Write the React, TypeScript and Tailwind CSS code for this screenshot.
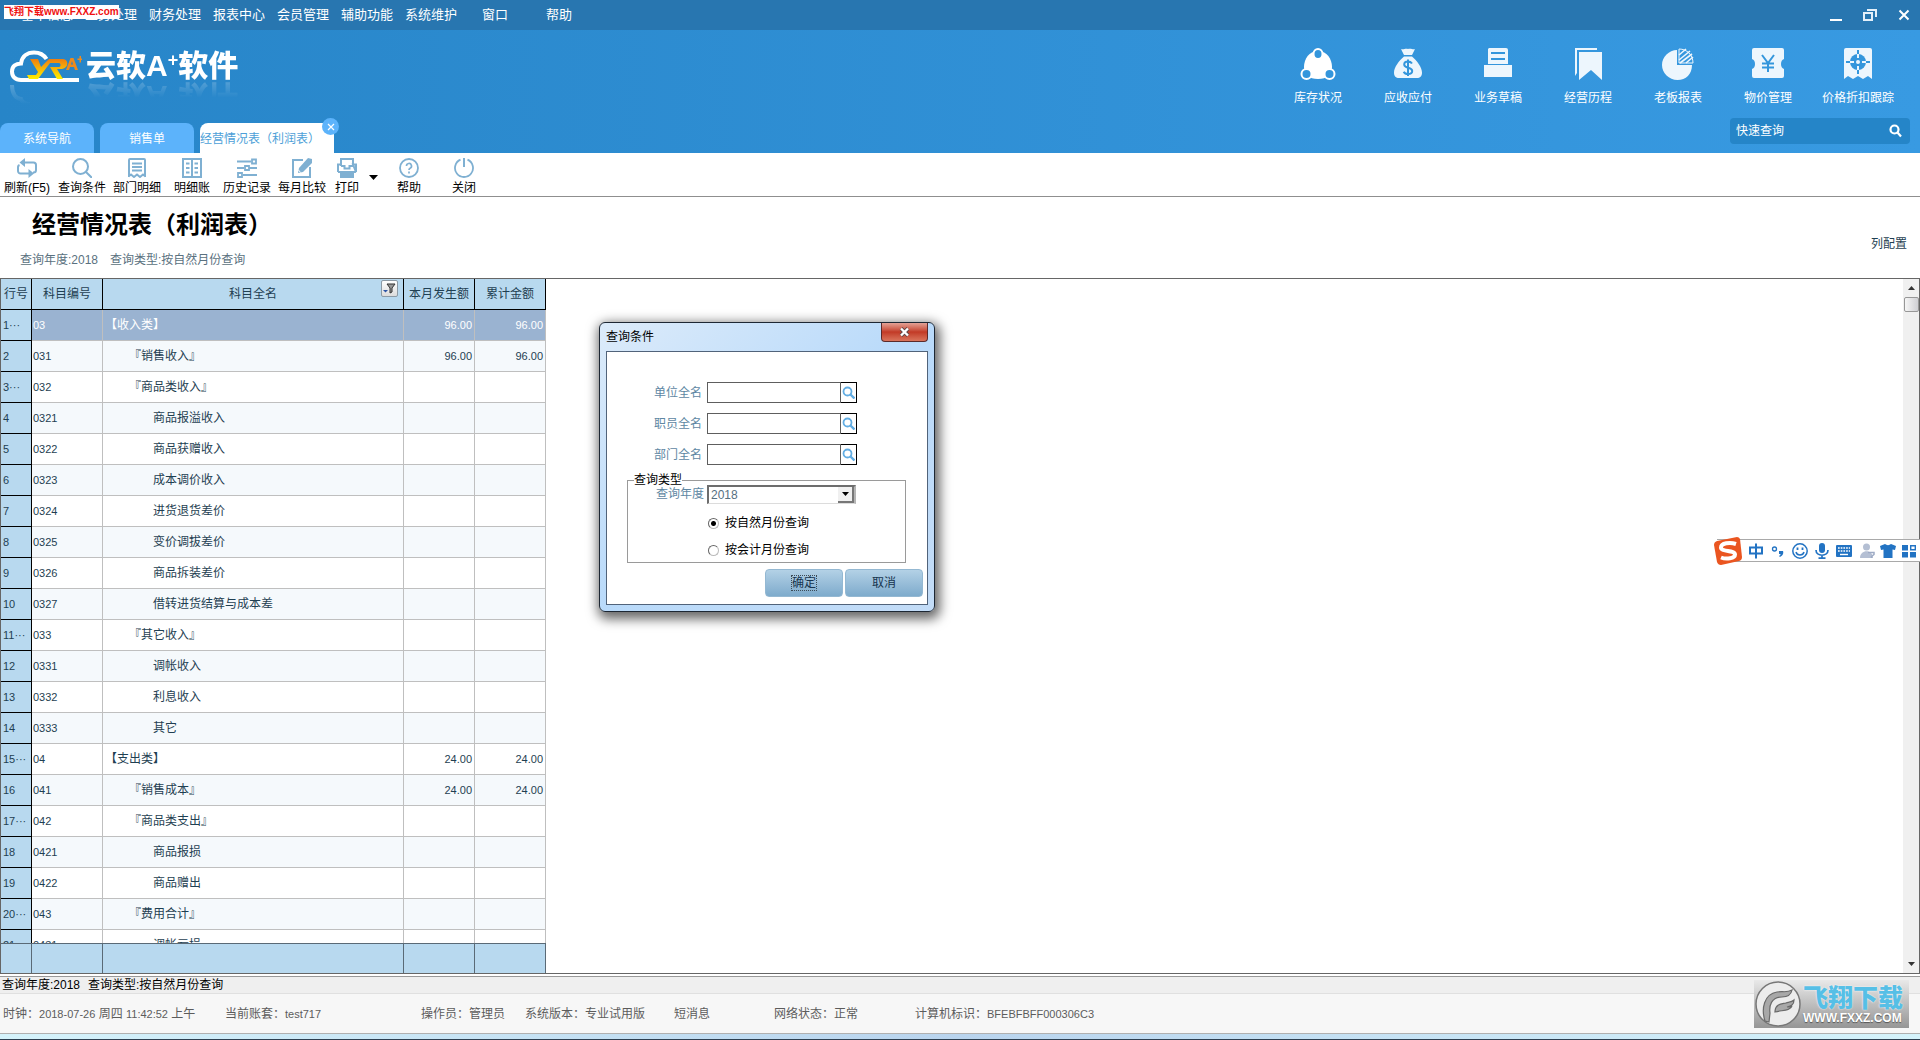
import { useState } from "react";
import type { ReactNode } from "react";

const menus = [
  "基本信息",
  "业务处理",
  "财务处理",
  "报表中心",
  "会员管理",
  "辅助功能",
  "系统维护",
  "窗口",
  "帮助",
];

const rows = [
  { no: "1···", code: "03", name: "【收入类】", level: 0, month: "96.00", total: "96.00" },
  { no: "2", code: "031", name: "『销售收入』", level: 1, month: "96.00", total: "96.00" },
  { no: "3···", code: "032", name: "『商品类收入』", level: 1 },
  { no: "4", code: "0321", name: "商品报溢收入", level: 2 },
  { no: "5", code: "0322", name: "商品获赠收入", level: 2 },
  { no: "6", code: "0323", name: "成本调价收入", level: 2 },
  { no: "7", code: "0324", name: "进货退货差价", level: 2 },
  { no: "8", code: "0325", name: "变价调拔差价", level: 2 },
  { no: "9", code: "0326", name: "商品拆装差价", level: 2 },
  { no: "10", code: "0327", name: "借转进货结算与成本差", level: 2 },
  { no: "11···", code: "033", name: "『其它收入』", level: 1 },
  { no: "12", code: "0331", name: "调帐收入", level: 2 },
  { no: "13", code: "0332", name: "利息收入", level: 2 },
  { no: "14", code: "0333", name: "其它", level: 2 },
  { no: "15···", code: "04", name: "【支出类】", level: 0, month: "24.00", total: "24.00" },
  { no: "16", code: "041", name: "『销售成本』", level: 1, month: "24.00", total: "24.00" },
  { no: "17···", code: "042", name: "『商品类支出』", level: 1 },
  { no: "18", code: "0421", name: "商品报损", level: 2 },
  { no: "19", code: "0422", name: "商品赠出", level: 2 },
  { no: "20···", code: "043", name: "『费用合计』", level: 1 },
  { no: "21", code: "0431", name: "调帐亏损", level: 2 },
];

const indents = ["pl-0.5", "pl-[26px]", "pl-[50px]"];

const ToolIcon = ({ children }: { children: ReactNode }) => (
  <svg className="size-5" viewBox="0 0 20 20" fill="none" stroke="#7fb0d2" strokeWidth="2">
    {children}
  </svg>
);

const tools = [
  {
    label: "刷新(F5)",
    icon: (
      <ToolIcon>
        <path d="M6 4.500h10.500A2.500 2.500 0 0 1 19 7v5a2.500 2.500 0 0 1-2.500 2.500H16M2.500 7A2.500 2.500 0 0 0 1 9.500V13a2.500 2.500 0 0 0 2.500 2.500H13" />
        <path d="M8 0v9L2.500 4.500zM11.500 11v9l5.500-4.500z" fill="#7fb0d2" stroke="none" />
      </ToolIcon>
    ),
  },
  {
    label: "查询条件",
    icon: (
      <ToolIcon>
        <circle cx="8.500" cy="8.500" r="7.500" />
        <path d="m14 14 6 6" />
      </ToolIcon>
    ),
  },
  {
    label: "部门明细",
    icon: (
      <ToolIcon>
        <path d="M2 19V2a1 1 0 0 1 1-1h14a1 1 0 0 1 1 1v17M1.500 18.500 4 16.500l3 2.500 3-2.500 3 2.500 3-2.500 2.500 2M5 5.500h10M5 9h10M5 12.500h10" />
      </ToolIcon>
    ),
  },
  {
    label: "明细账",
    icon: (
      <ToolIcon>
        <path d="M1 1h18v18H1zM10 1v18M4 5.500h3.500M4 10h3.500M4 14.500h3.500M12.500 5.500H16M12.500 10H16M12.500 14.500H16" />
      </ToolIcon>
    ),
  },
  {
    label: "历史记录",
    icon: (
      <ToolIcon>
        <path d="M0 3.500h14M0 10h7M12 10h8M6 17h14" />
        <path d="M15 1.500h4v4h-4zM8 8h4v4H8zM1 15h4v4H1z" strokeWidth="1.800" />
      </ToolIcon>
    ),
  },
  {
    label: "每月比较",
    icon: (
      <ToolIcon>
        <path d="M11 2H1v17h17V9" />
        <path d="m16 0 4 1v4L11 14l-5 1 1-5z" fill="#7fb0d2" stroke="none" />
        <path d="m6.500 12 2 2.500" stroke="#fff" strokeWidth="1" />
      </ToolIcon>
    ),
  },
  {
    label: "打印",
    icon: (
      <ToolIcon>
        <path d="M4 8V1h12v7M1 14V6.500h3M16 6.500h3V14zM1 14h18M4 8h3.500v2.500h5V8H16" />
        <path d="M3 15h14v5H3z" fill="#7fb0d2" stroke="none" />
      </ToolIcon>
    ),
  },
  {
    label: "帮助",
    icon: (
      <ToolIcon>
        <circle cx="10" cy="10" r="9" strokeWidth="1.800" />
        <path d="M7.500 8a2.500 2.500 0 1 1 3.600 2.200c-.8.400-1.100.9-1.100 1.900M10 13.500v2" strokeWidth="1.700" />
      </ToolIcon>
    ),
  },
  {
    label: "关闭",
    icon: (
      <ToolIcon>
        <path d="M6.500 1.700a9 9 0 1 0 7 0" strokeWidth="1.800" />
        <path d="M10 0v9" />
      </ToolIcon>
    ),
  },
];

const NavIcon = ({ children }: { children: ReactNode }) => (
  <svg className="h-8 w-9" viewBox="0 0 36 32" fill="#edf6fd">
    {children}
  </svg>
);

const shortcuts = [
  {
    label: "库存状况",
    icon: (
      <NavIcon>
        <path d="M18 3C9 3 4 11 4 19c0 8 5 12 14 12s14-4 14-12C32 11 27 3 18 3z" fill="#fff" />
        <g fill="#3496dc" stroke="#fff" strokeWidth="2">
          <ellipse cx="18" cy="6" rx="4.500" ry="5" />
          <circle cx="6.500" cy="26" r="5" />
          <circle cx="29.500" cy="26" r="5" />
        </g>
      </NavIcon>
    ),
  },
  {
    label: "应收应付",
    icon: (
      <NavIcon>
        <path d="M11 1c3 1 4-1 7 0 3-1 5 1 7 0l-3 6h-8zM14 8.500h8c5 4 10 11 10 16 0 4-2 5.500-5 5.500H9c-3 0-5-1.500-5-5.500 0-5 5-12 10-16z" />
        <path d="M22 15.500c-1-1.500-2.300-2-4-2-2.200 0-3.800 1-3.800 3 0 4.500 8 2 8 6.500 0 2-1.700 3-4.200 3-2 0-3.500-.7-4.300-2.300M18 11.500v16.500" fill="none" stroke="#3496dc" strokeWidth="2" />
      </NavIcon>
    ),
  },
  {
    label: "业务草稿",
    icon: (
      <NavIcon>
        <path d="M9 0h17a2 2 0 0 1 2 2v14H8V1zM4 17h28v12H4z" />
        <path d="M11 5h14M11 11h14" stroke="#3496dc" strokeWidth="2" />
      </NavIcon>
    ),
  },
  {
    label: "经营历程",
    icon: (
      <NavIcon>
        <path d="M5 0h22v2H7v23l-2 3zM9 4h23v28l-11-10L9 32z" />
      </NavIcon>
    ),
  },
  {
    label: "老板报表",
    icon: (
      <NavIcon>
        <path d="M17 2v15h15c0 9-6 15-14.500 15S2 25 2 17 9 2 17 2z" />
        <path d="m19 7 7-6M19 12 30 3M20 15 32 6M26 15l7-6" stroke="#edf6fd" strokeWidth="1.600" />
        <path d="M19 1v14h14c0-8-6-14-14-14z" fill="none" stroke="#edf6fd" strokeWidth="1" />
      </NavIcon>
    ),
  },
  {
    label: "物价管理",
    icon: (
      <NavIcon>
        <path d="M4 0h28a2 2 0 0 1 2 2v9c-4 1-4 9 0 10v7a2 2 0 0 1-2 2H4a2 2 0 0 1-2-2v-7c4-1 4-9 0-10V2a2 2 0 0 1 2-2z" />
        <path d="m12 7 6 8 6-8M18 15v9M12 15.500h12M12 19.500h12" fill="none" stroke="#3496dc" strokeWidth="2" />
      </NavIcon>
    ),
  },
  {
    label: "价格折扣跟踪",
    icon: (
      <NavIcon>
        <path d="M6 0h24a2 2 0 0 1 2 2v29l-4-3-5 3-5-3-5 3-5-3-4 3V2a2 2 0 0 1 2-2z" />
        <circle cx="18" cy="14" r="8" fill="#3496dc" />
        <path d="M18 2v9M18 17v9M6 14h9M21 14h9" stroke="#3496dc" strokeWidth="2" />
        <path d="M18 6v4M18 18v4M10 14h4M22 14h4" stroke="#edf6fd" strokeWidth="2" />
        <circle cx="18" cy="14" r="2" />
      </NavIcon>
    ),
  },
];

const Logo = () => (
  <a href="#home" aria-label="云软A+软件" className="ml-2 flex h-11 items-start gap-1 text-white">
    <svg width="74" height="56" viewBox="0 0 74 56">
      <defs>
        <linearGradient id="gold" x1="0" y1="0" x2="0" y2="1">
          <stop offset="0" stopColor="#ee7d10" />
          <stop offset="1" stopColor="#fff100" />
        </linearGradient>
        <linearGradient id="fade" x1="0" y1="0" x2="0" y2="1">
          <stop offset="0" stopColor="#fff" stopOpacity="0.22" />
          <stop offset="1" stopColor="#fff" stopOpacity="0" />
        </linearGradient>
      </defs>
      <path d="M71 30H13C7 30 4 26.500 4 21.500S7.500 13.500 13 13.500C14 6.500 19 2.500 26 2.500c6 0 10 2.500 12.500 6.500" fill="none" stroke="#fff" strokeWidth="4" />
      <path d="M4 35C4 44 8 49 13 49c1 4 5 5 9 5" fill="none" stroke="url(#fade)" strokeWidth="4" />
      <path d="M22 9h8l3 8 8-8h14c6 0 6 9-1 10h-5l6 10h-6l-7-12h9c2 0 2-4 0-4h-9L30 29h-9l-2-4h9l2-3z" fill="url(#gold)" />
      <path d="M58 20l4.500-12h3L70 20h-3l-1-3h-4l-1 3zM63 14.500h2L64 11zM69.500 8.500h2V6h1.500v2.500h2V10h-2v2.500h-1.500V10h-2z" fill="#ee8a1c" />
    </svg>
    <span className="flex items-start text-[30px] leading-8 font-black [-webkit-box-reflect:below_-2px_linear-gradient(transparent_45%,rgba(255,255,255,0.22))]">
      云软A<span className="text-[18px] leading-5">+</span>软件
    </span>
  </a>
);

const Header = () => (
  <header className="bg-linear-to-r from-[#2785c8] to-[#389ae2] text-white">
    <nav className="flex h-[30px] items-center justify-between bg-[#2876b0]">
      <div className="flex pl-[15px] text-[13px]">
        {menus.map((m) => (
          <button key={m} className="w-16 text-center leading-[30px]">
            {m}
          </button>
        ))}
      </div>
      <div className="flex items-center gap-5 pr-[9px]">
        <button aria-label="最小化">
          <svg width="14" height="14" viewBox="0 0 14 14"><path d="M1 11h12v2H1z" fill="#fff" /></svg>
        </button>
        <button aria-label="还原">
          <svg width="14" height="14" viewBox="0 0 14 14" fill="none" stroke="#e4f0fa" strokeWidth="2"><path d="M1 5h8v7H1zM4 2h9v7" /></svg>
        </button>
        <button aria-label="关闭窗口">
          <svg width="14" height="14" viewBox="0 0 14 14" stroke="#fff" strokeWidth="2"><path d="m2.500 2.500 9 9M11.500 2.500l-9 9" /></svg>
        </button>
      </div>
    </nav>
    <div className="flex h-[123px] justify-between">
      <div className="flex flex-col justify-between pt-5">
        <Logo />
        <div className="flex gap-1.5 text-xs">
          <button className="h-[30px] w-[94px] rounded-t-lg bg-[#5cb3fb] pt-0.5">系统导航</button>
          <button className="h-[30px] w-[94px] rounded-t-lg bg-[#5cb3fb] pt-0.5">销售单</button>
          <div className="relative">
            <button className="h-[30px] w-[134px] rounded-t-lg bg-white pt-0.5 text-left whitespace-nowrap text-[#4d9fd8]">
              经营情况表（利润表）
            </button>
            <button aria-label="关闭标签" className="absolute -top-[5px] -right-[5px] flex size-[17px] items-center justify-center rounded-full bg-[#5cb3fb]">
              <svg width="8" height="8" viewBox="0 0 8 8" stroke="#fff" strokeWidth="1.200"><path d="m1 1 6 6M7 1 1 7" /></svg>
            </button>
          </div>
        </div>
      </div>
      <div className="flex flex-col items-end gap-3 pt-[18px]">
        <div className="flex pr-[17px]">
          {shortcuts.map((s) => (
            <button key={s.label} className="flex w-[90px] flex-col items-center gap-2.5 text-xs leading-4">
              {s.icon}
              {s.label}
            </button>
          ))}
        </div>
        <div className="mr-2.5 flex h-[26px] w-[180px] items-center rounded bg-[#2585c8] px-1.5">
          <input aria-label="快速查询" placeholder="快速查询" className="w-full min-w-0 bg-transparent text-xs outline-none placeholder:text-white" />
          <button aria-label="搜索">
            <svg width="16" height="16" viewBox="0 0 16 16" fill="none" stroke="#fff" strokeWidth="2.200"><circle cx="6.500" cy="6.500" r="4" /><path d="m9.500 9.500 3.500 4" /></svg>
          </button>
        </div>
      </div>
    </div>
  </header>
);

const Toolbar = () => (
  <div className="flex h-11 border-b border-[#8f8f8f] bg-white pt-[5px] text-xs text-black">
    {tools.map((t) => (
      <div key={t.label} className="flex">
        <button className={`flex flex-col items-center gap-0.5 leading-4 whitespace-nowrap ${t.label === "打印" ? "w-[34px]" : "w-[55px] pr-px"}`}>
          {t.icon}
          {t.label}
        </button>
        {t.label === "打印" && (
          <button aria-label="打印选项" className="flex w-[18px] items-center justify-center">
            <svg width="9" height="5" viewBox="0 0 9 5"><path d="M0 0h9L4.500 5z" /></svg>
          </button>
        )}
      </div>
    ))}
  </div>
);

const ReportTable = () => (
  <table className="w-[546px] table-fixed border-separate border-spacing-0 border-l border-[#666] text-xs text-[#1f3f52]">
    <colgroup>
      <col className="w-[31px]" />
      <col className="w-[71px]" />
      <col className="w-[301px]" />
      <col className="w-[71px]" />
      <col className="w-[71px]" />
    </colgroup>
    <thead className="sticky top-0">
      <tr className="h-[31px]">
        {["行号", "科目编号", "科目全名", "本月发生额", "累计金额"].map((h) => (
          <th key={h} scope="col" className="relative border-r border-b border-black bg-[#b8d9ef] p-0 font-normal">
            {h}
            {h === "科目全名" && (
              <button aria-label="筛选" className="absolute top-px right-[5px] flex size-[17px] items-center justify-center rounded-xs border border-[#8c9aa5] bg-linear-to-b from-white to-[#dcdcdc]">
                <svg width="13" height="11" viewBox="0 0 13 11">
                  <path d="M4 1h8L9 5v4L7 10V5z" fill="#999" stroke="#333" />
                  <path d="M0 7h5L2.500 9.500z" fill="#2c55a5" />
                </svg>
              </button>
            )}
          </th>
        ))}
      </tr>
    </thead>
    <tbody>
      {rows.map((r, i) => {
        const cell = "border-r border-b border-[#bfbfbf] p-0";
        return (
          <tr key={r.code} className={`h-[31px] ${i === 0 ? "bg-[#9ab3d1] text-white" : i % 2 ? "bg-[#f5f9fc]" : "bg-white"}`}>
            <td className="border-r border-b border-black bg-[#b8d9ef] p-0 pl-0.5 text-[11px] whitespace-nowrap text-[#1f3f52]">{r.no}</td>
            <td className={`${cell} pl-px text-[11px]`}>{r.code}</td>
            <td className={`${cell} ${indents[r.level]}`}>{r.name}</td>
            <td className={`${cell} pr-0.5 text-right text-[11px]`}>{r.month}</td>
            <td className={`${cell} pr-0.5 text-right text-[11px]`}>{r.total}</td>
          </tr>
        );
      })}
    </tbody>
    <tfoot className="sticky bottom-0">
      <tr className="h-[30px]">
        {[0, 1, 2, 3, 4].map((c) => (
          <td key={c} className="border-t border-r border-[#5a6a76] bg-[#b8d9ef] p-0" />
        ))}
      </tr>
    </tfoot>
  </table>
);

const ScrollBar = () => (
  <div className="flex w-4 flex-col items-center justify-between bg-[#f0f0f0]">
    <div className="flex w-full flex-col items-center">
      <button aria-label="向上" className="flex h-[18px] items-center">
        <svg width="7" height="4" viewBox="0 0 7 4"><path d="M0 4h7L3.500 0z" fill="#333" /></svg>
      </button>
      <div className="h-[15px] w-[15px] rounded-xs border border-[#979797] bg-linear-to-r from-[#f6f6f6] to-[#cfcfd3]" />
    </div>
    <button aria-label="向下" className="flex h-[18px] items-center">
      <svg width="7" height="4" viewBox="0 0 7 4"><path d="M0 0h7L3.500 4z" fill="#333" /></svg>
    </button>
  </div>
);

const QueryDialog = () => {
  const [mode, setMode] = useState("natural");

  return (
    <div role="dialog" aria-label="查询条件" className="absolute top-[322px] left-[599px] w-[336px] rounded-md border border-[#1d2733] bg-linear-to-br from-[#dcebfa] via-[#b9dafa] to-[#c3dcf7] px-1.5 pb-1.5 text-xs shadow-[2px_4px_12px_3px_rgba(0,0,0,0.6)]">
      <div className="flex h-7 justify-between">
        <h2 className="pt-1.5 leading-4 text-black">查询条件</h2>
        <button aria-label="关闭对话框" className="flex h-[19px] w-[47px] items-center justify-center rounded-b border border-t-0 border-[#5b2a2a] bg-linear-to-b from-[#e2a196] via-[#c23a26] to-[#d9745c]">
          <svg width="11" height="10" viewBox="0 0 11 10"><path d="m2 1.500 7 7M9 1.500l-7 7" stroke="#5e4a4a" strokeWidth="4" /><path d="m2 1.500 7 7M9 1.500l-7 7" stroke="#fff" strokeWidth="2.400" /></svg>
        </button>
      </div>
      <form className="h-[254px] border border-[#51637a] bg-white pt-[30px] text-[#5e87a3]" onSubmit={(e) => e.preventDefault()}>
        <div className="flex flex-col gap-2.5 pl-[47px]">
          {["单位全名", "职员全名", "部门全名"].map((f) => (
            <div key={f} className="flex h-[21px] items-center">
              <label htmlFor={f} className="w-[53px]">{f}</label>
              <input id={f} className="h-[21px] w-[134px] border border-[#5e5e5e] px-1 outline-none" />
              <button type="button" aria-label={`选择${f}`} className="flex h-[21px] w-4 items-center justify-center border border-l-0 border-black">
                <svg width="13" height="13" viewBox="0 0 13 13" fill="none" stroke="#62ade3" strokeWidth="1.800"><circle cx="5.500" cy="5.500" r="4" /><path d="m8.500 8.500 4 4" strokeWidth="2.400" /></svg>
              </button>
            </div>
          ))}
        </div>
        <fieldset className="mt-[7px] ml-5 h-[91px] w-[279px] border border-[#9a9a9a] px-1.5 text-black">
          <legend className="leading-4">查询类型</legend>
          <div className="-mt-1 flex h-5 items-center pl-[22px]">
            <label htmlFor="year" className="w-[51px] text-[#5e87a3]">查询年度</label>
            <div className="relative">
              <select id="year" defaultValue="2018" className="h-[19px] w-[149px] appearance-none border-t-2 border-r-2 border-b border-l-2 border-t-[#6d6d6d] border-r-[#b5b5b5] border-b-[#dcdcdc] border-l-[#6d6d6d] bg-white pl-0.5 text-[#56707f] outline-none">
                <option>2018</option>
                <option>2017</option>
              </select>
              <span className="pointer-events-none absolute top-0.5 right-0.5 flex h-4 w-4 items-center justify-center border-r-2 border-b-2 border-[#777] bg-[#f0f0f0]">
                <svg width="7" height="4" viewBox="0 0 7 4"><path d="M0 0h7L3.500 4z" /></svg>
              </span>
            </div>
          </div>
          {[
            { id: "natural", label: "按自然月份查询" },
            { id: "fiscal", label: "按会计月份查询" },
          ].map((o) => (
            <label key={o.id} className="mt-[11px] flex h-4 items-center gap-1.5 pl-[74px]">
              <input
                type="radio"
                name="mode"
                checked={mode === o.id}
                onChange={() => setMode(o.id)}
                className="size-[11px] appearance-none rounded-full border border-t-[#666] border-r-[#bbb] border-b-[#bbb] border-l-[#666] bg-white checked:bg-[radial-gradient(circle,#000_2px,#fff_3px)]"
              />
              {o.label}
            </label>
          ))}
        </fieldset>
        <div className="mt-1.5 flex justify-end gap-0.5 pr-1 text-[#16344f]">
          <button className="h-7 w-[78px] rounded-sm border border-[#94b8d2] bg-linear-to-b from-[#b3d1e6] to-[#7eabcc]">
            <span className="outline-1 outline-[#3c4b57] outline-dotted">确定</span>
          </button>
          <button type="button" className="h-7 w-[78px] rounded-sm border border-[#94b8d2] bg-linear-to-b from-[#b3d1e6] to-[#7eabcc]">
            取消
          </button>
        </div>
      </form>
    </div>
  );
};

const ImeBar = () => (
  <div className="absolute top-[539px] right-0 flex h-[23px] items-center border-y border-[#a9a9a9] bg-white">
    <svg className="-my-1 -ml-1 h-7 w-[30px]" viewBox="0 0 30 28">
      <path d="M4 4 24 0q2 0 3 2l2 18q0 3-3 4L8 28q-3 0-4-3L1 8q0-3 3-4z" fill="#ea5520" />
      <path d="M23 7C17 5 8 6 8 10.500c0 5 14 2 14 7 0 4-9 5-14 3" fill="none" stroke="#fff" strokeWidth="4" />
    </svg>
    <svg width="177" height="20" viewBox="0 0 177 20" fill="#2273c3">
      <path d="M7 6.500h12v6H7zM13 2.500v15" fill="none" stroke="#2273c3" strokeWidth="2" />
      <circle cx="31.500" cy="8" r="2" fill="none" stroke="#2273c3" strokeWidth="1.300" />
      <path d="M36 10h4c1 3-1 5-3 6l-1-1c1-.5 1.500-1 1.500-2H36z" />
      <g fill="none" stroke="#2273c3" strokeWidth="1.500">
        <circle cx="57" cy="10" r="7.200" />
        <path d="M53 11c1 4 7 4 8 0" />
        <path d="M54.500 6.500v2.500M59.500 6.500v2.500" strokeWidth="1.800" />
        <path d="M73 9c0 7 12 7 12 0M79 14v3M75.500 17.200h7" strokeWidth="1.700" />
      </g>
      <rect x="76" y="2" width="6" height="10" rx="3" />
      <rect x="93" y="4" width="16" height="12" rx="1" />
      <path d="M95 7h12M95 10h12" stroke="#fff" strokeWidth="1.600" strokeDasharray="1.700 1" />
      <path d="M97 13.500h8" stroke="#fff" strokeWidth="1.400" />
      <g fill="#b4bfd3">
        <circle cx="123.500" cy="6" r="3.500" />
        <path d="M117 17c0-9 13-9 13 0z" />
        <path d="M125 11.500h6v2l-2.500 2v1.500" fill="none" stroke="#9eabc5" strokeWidth="1.500" />
      </g>
      <path d="M142 3c1.500 1.500 4.500 1.500 6 0l5 2-1 4-2.500-.5V17h-9V8.500L138 9l-1-4z" />
      <path d="M159 4h6v5.500h-6zM159 11h6v5.500h-6zM167 11h6v5.500h-6z" />
      <path d="M167.700 4.700h4.600v4h-4.600z" fill="none" stroke="#2273c3" strokeWidth="1.400" />
    </svg>
  </div>
);

const StatusBar = () => (
  <footer>
    <div className="mt-0.5 h-[18px] border-t border-b border-t-[#999] border-b-[#e0e0e0] bg-[#efefef] pl-0.5 text-xs leading-4 text-black">
      查询年度:2018<span className="ml-2">查询类型:按自然月份查询</span>
    </div>
    <div className="flex h-10 items-center border-b border-[#b0b0b0] bg-[#f7f7f7] pl-[3px] text-xs whitespace-nowrap text-[#5c5c5c]">
      <span className="w-[222px]">时钟：<span className="text-[11px]">2018-07-26</span> 周四 <span className="text-[11px]">11:42:52</span> 上午</span>
      <span className="w-[196px]">当前账套：<span className="text-[11px]">test717</span></span>
      <span className="w-[104px]">操作员：管理员</span>
      <span className="w-[149px]">系统版本：专业试用版</span>
      <span className="w-[100px]">短消息</span>
      <span className="w-[141px]">网络状态：正常</span>
      <span>计算机标识：<span className="text-[11px]">BFEBFBFF000306C3</span></span>
    </div>
    <div className="h-1.5 border-b border-[#2c3e50] bg-linear-to-r from-[#d5f3fb] via-[#b9d4ee] to-[#d5f3fb]" />
  </footer>
);

const SiteBadge = () => (
  <div className="absolute right-[11px] bottom-3 flex h-12 w-[155px] items-center gap-0.5 bg-linear-to-b from-[#e9e9e9] to-[#969696] pl-px">
    <svg className="size-[46px] shrink-0" viewBox="0 0 46 46">
      <circle cx="23" cy="23" r="22" fill="#ececec" stroke="#777" strokeWidth="1.500" />
      <path d="M10 40C6 28 9 13 22 11c6-1 10 1 15-2-1 5-5 7-10 7-11 0-13 9-12 16l-1 9zM20 30c1-8 8-7 11-8 4-1 6-1 8-3 0 5-3 6-7 7 2 0 4 0 5-1-2 5-9 4-17 6z" fill="#a8a8a8" stroke="#6a6a6a" strokeWidth="1.200" />
    </svg>
    <div className="flex flex-col whitespace-nowrap">
      <span className="text-[25px] leading-7 font-black text-[#56bfe6] text-shadow-[0_0_2px_#fff]">飞翔下载</span>
      <span className="text-xs leading-3 font-bold text-white text-shadow-[0_1px_1px_#555]">WWW.FXXZ.COM</span>
    </div>
  </div>
);

export default function App() {
  return (
    <div className="relative flex h-screen flex-col overflow-hidden bg-white font-['Liberation_Sans','Noto_Sans_CJK_SC',sans-serif]">
      <Header />
      <Toolbar />
      <div className="flex h-[81px] shrink-0 justify-between pr-[13px] pl-5">
        <div className="pt-3">
          <h1 className="pl-3 text-2xl leading-8 font-bold text-black">经营情况表（利润表）</h1>
          <p className="mt-2.5 flex gap-3 text-xs leading-[18px] text-[#5a7180]">
            <span>查询年度:2018</span>
            <span>查询类型:按自然月份查询</span>
          </p>
        </div>
        <button className="mt-[38px] self-start text-xs leading-[18px] text-[#1f3f52]">列配置</button>
      </div>
      <main className="flex min-h-0 flex-1 justify-between border-t border-r border-b border-[#666]">
        <div className="overflow-hidden">
          <ReportTable />
        </div>
        <ScrollBar />
      </main>
      <StatusBar />

      <a href="#download" className="absolute top-[5px] left-1 flex h-3.5 items-center bg-white text-[10px] leading-3 font-bold whitespace-nowrap text-[#f01010]">
        <span>飞翔下载</span>
        <span>www.FXXZ.com</span>
      </a>
      <QueryDialog />
      <ImeBar />
      <SiteBadge />
    </div>
  );
}
